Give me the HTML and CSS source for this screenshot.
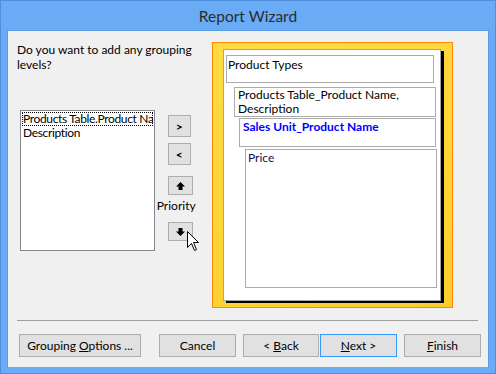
FILE: index.html
```html
<!DOCTYPE html>
<html>
<head>
<meta charset="utf-8">
<link rel="stylesheet" href="styles.css">
</head>
<body>
<div class="window">
  <div class="titlebar">Report Wizard</div>
  <div class="client">
    <div class="top">
      <div class="leftcol">
        <p class="question">Do you want to add any grouping levels?</p>
        <div class="listrow">
          <div class="listbox">
            <div class="item focused">Products Table.Product Nar</div>
            <div class="item">Description</div>
          </div>
          <div class="btncol">
            <button class="sbtn gt">&gt;</button>
            <button class="sbtn lt">&lt;</button>
            <button class="sbtn arrow up"><svg width="9" height="8" viewBox="0 0 9 8"><path d="M4.5 0 L9 4.5 L6.5 4.5 L6.5 8 L2.5 8 L2.5 4.5 L0 4.5 Z" fill="#000"/></svg></button>
            <div class="priority">Priority</div>
            <button class="sbtn arrow down"><svg width="9" height="8" viewBox="0 0 9 8"><path d="M4.5 8 L9 3.5 L6.5 3.5 L6.5 0 L2.5 0 L2.5 3.5 L0 3.5 Z" fill="#000"/></svg></button>
            <svg class="cursor" width="13" height="21" viewBox="0 0 13 21"><path d="M0.5 0.5 L0.5 16.5 L4.5 12.5 L7.5 19.5 L9.5 18.5 L6.5 11.5 L11.5 11.5 Z" fill="#fff" stroke="#000" stroke-width="1"/></svg>
          </div>
        </div>
      </div>
      <div class="preview">
        <div class="page">
          <div class="box b1">Product Types</div>
          <div class="box b2">Products Table_Product Name, Description</div>
          <div class="box b3">Sales Unit_Product Name</div>
          <div class="box b4">Price</div>
        </div>
      </div>
    </div>
    <div class="sep"></div>
    <div class="buttons">
      <button class="btn grouping">Grouping <u>O</u>ptions ...</button>
      <button class="btn cancel">Cancel</button>
      <button class="btn back">&lt; <u>B</u>ack</button>
      <button class="btn next"><u>N</u>ext &gt;</button>
      <button class="btn finish"><u>F</u>inish</button>
    </div>
  </div>
</div>
</body>
</html>
```
FILE: styles.css
```css
html, body {
  margin: 0;
  padding: 0;
}
body {
  width: 496px;
  height: 374px;
  overflow: hidden;
  font-family: Lato, "Liberation Sans", sans-serif;
  font-size: 12px;
  color: #000;
}
.window {
  box-sizing: border-box;
  width: 496px;
  height: 374px;
  background: #6aabf5;
  border: 1px solid #4f8fdb;
  display: flex;
  flex-direction: column;
}
.titlebar {
  height: 29px;
  line-height: 31px;
  text-align: center;
  font-size: 15.5px;
  color: #2b2b2b;
}
.client {
  box-sizing: border-box;
  margin: 0 6px 0 6px;
  height: 337px;
  background: #f0f0f0;
  border: 1px solid #5d9ae6;
  border-bottom: none;
  display: flex;
  flex-direction: column;
}
.top {
  display: flex;
  height: 278px;
  padding-left: 9px;
  padding-top: 11px;
  box-sizing: border-box;
}
.leftcol {
  width: 195px;
  display: flex;
  flex-direction: column;
}
.question {
  margin: 0;
  line-height: 15px;
  width: 175px;
}
.listrow {
  display: flex;
  margin-top: 38px;
  margin-left: 3px;
}
.listbox {
  box-sizing: border-box;
  width: 137px;
  height: 141px;
  background: #fff;
  border: 1px solid #828790;
  padding: 1px;
  overflow: hidden;
}
.item {
  white-space: nowrap;
  overflow: hidden;
  line-height: 14px;
  padding-left: 1px;
  letter-spacing: -0.35px;
}
.item.focused {
  outline: 1px dotted #000;
  outline-offset: -1px;
}
.btncol {
  position: relative;
  display: flex;
  flex-direction: column;
  align-items: flex-start;
  margin-left: 13px;
  padding-top: 5px;
  width: 45px;
}
.sbtn {
  box-sizing: border-box;
  background: #e1e1e1;
  border: 1px solid #adadad;
  padding: 0;
  margin: 0;
  font-family: Lato, "Liberation Sans", sans-serif;
  font-size: 12px;
  font-weight: bold;
  color: #000;
  display: flex;
  align-items: center;
  justify-content: center;
}
.gt, .lt {
  width: 23px;
  height: 22px;
}
.lt {
  margin-top: 6px;
}
.arrow {
  width: 25px;
  height: 19px;
}
.up {
  margin-top: 11px;
}
.priority {
  margin-top: 3px;
  margin-left: -11px;
  line-height: 15px;
}
.down {
  margin-top: 9px;
}
.cursor {
  position: absolute;
  left: 19px;
  top: 121px;
}
.preview {
  box-sizing: border-box;
  width: 241px;
  height: 266px;
  border: 1px solid #ff8a00;
  background: linear-gradient(160deg, #ffdb45 0%, #ffd435 60%, #fdcb2f 100%);
  padding: 6px 0 0 10px;
}
.page {
  box-sizing: border-box;
  position: relative;
  width: 218px;
  height: 252px;
  background: #fff;
  border: 1px solid #a5a5a5;
  box-shadow: 3px 2px 0 #000;
  display: flex;
  flex-direction: column;
  align-items: flex-start;
  padding-top: 5px;
}
.box {
  box-sizing: border-box;
  border: 1px solid #ababab;
  line-height: 15px;
  padding: 1px 1px;
}
.b1 {
  margin-left: 2px;
  width: 208px;
  height: 28px;
}
.b2 {
  margin-top: 4px;
  margin-left: 10px;
  width: 202px;
  height: 30px;
  padding: 0 3px;
  line-height: 14px;
}
.b3 {
  margin-top: 1px;
  margin-left: 15px;
  width: 197px;
  height: 29px;
  color: #0000ff;
  font-weight: bold;
  padding: 0 3px;
}
.b4 {
  margin-top: 2px;
  margin-left: 21px;
  width: 192px;
  height: 139px;
  padding: 0 2px;
  color: #10104a;
}
.sep {
  height: 1px;
  background: #a0a0a0;
  margin: 11px 10px 0 9px;
}
.buttons {
  display: flex;
  padding-top: 13px;
  padding-left: 11px;
}
.btn {
  box-sizing: border-box;
  height: 23px;
  background: #e1e1e1;
  border: 1px solid #adadad;
  padding: 0;
  margin: 0;
  font-family: Lato, "Liberation Sans", sans-serif;
  font-size: 12px;
  color: #000;
}
.grouping { width: 122px; }
.cancel { width: 77px; margin-left: 18px; }
.back { width: 76px; margin-left: 7px; }
.next { width: 77px; margin-left: 1px; border-color: #3399ff; }
.finish { width: 77px; margin-left: 7px; }
```
